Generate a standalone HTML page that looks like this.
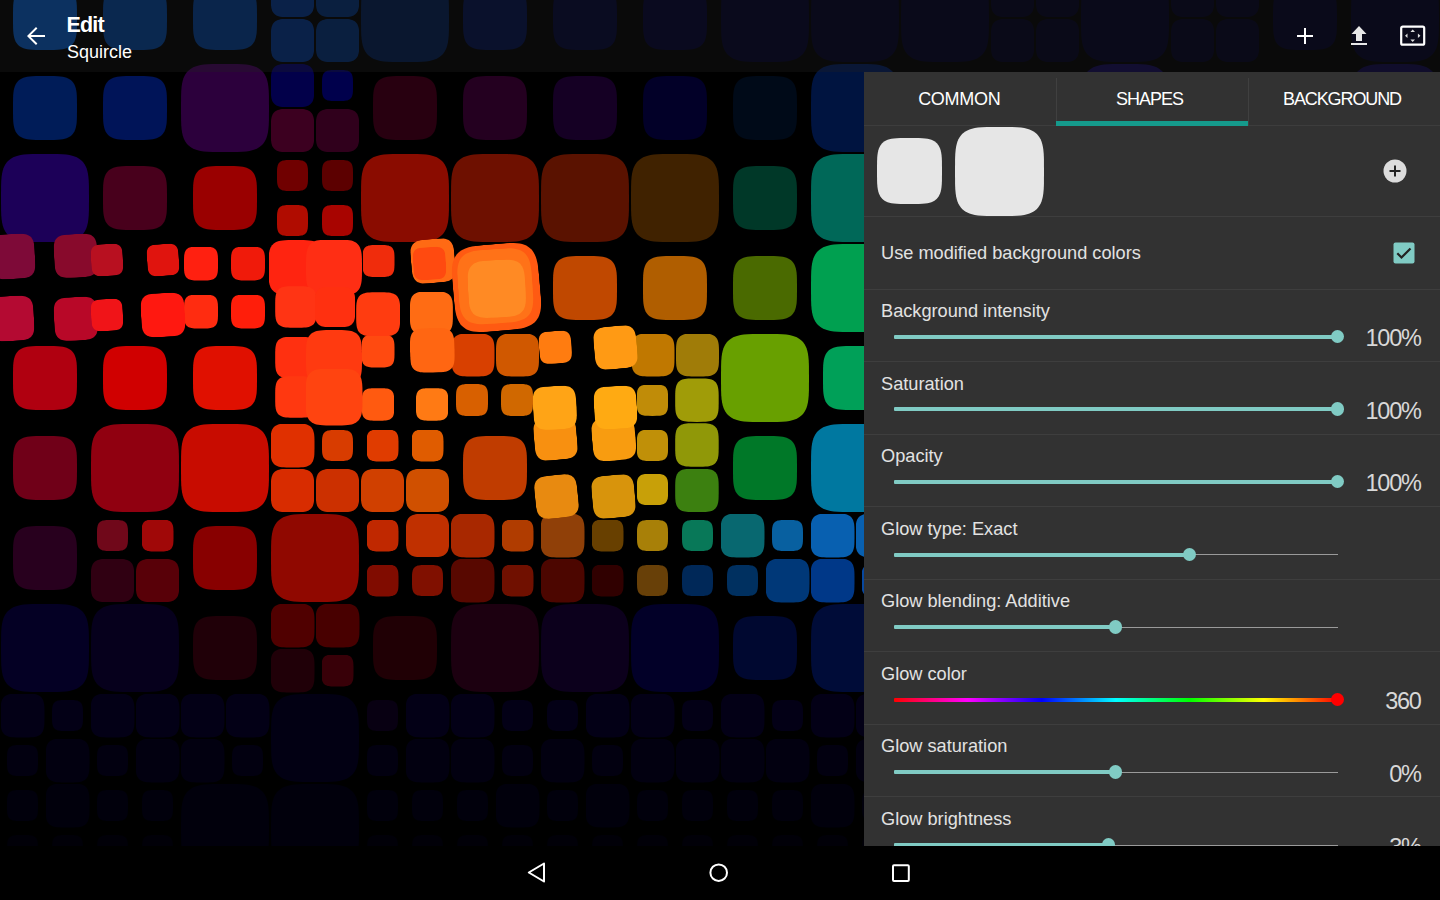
<!DOCTYPE html>
<html lang="en"><head><meta charset="utf-8"><title>Edit – Squircle</title>
<style>
*{margin:0;padding:0;box-sizing:border-box}
html,body{width:1440px;height:900px;overflow:hidden;background:#000}
body{position:relative;font-family:"Liberation Sans",sans-serif;color:#fff}
.q{position:absolute;display:block;clip-path:polygon(100.00% 50.00%,99.92% 64.01%,99.69% 69.78%,99.30% 74.16%,98.76% 77.79%,98.06% 80.93%,97.20% 83.69%,96.17% 86.14%,94.97% 88.33%,93.60% 90.29%,92.04% 92.04%,90.29% 93.60%,88.33% 94.97%,86.14% 96.17%,83.69% 97.20%,80.93% 98.06%,77.79% 98.76%,74.16% 99.30%,69.78% 99.69%,64.01% 99.92%,50.00% 100.00%,35.99% 99.92%,30.22% 99.69%,25.84% 99.30%,22.21% 98.76%,19.07% 98.06%,16.31% 97.20%,13.86% 96.17%,11.67% 94.97%,9.71% 93.60%,7.96% 92.04%,6.40% 90.29%,5.03% 88.33%,3.83% 86.14%,2.80% 83.69%,1.94% 80.93%,1.24% 77.79%,0.70% 74.16%,0.31% 69.78%,0.08% 64.01%,0.00% 50.00%,0.08% 35.99%,0.31% 30.22%,0.70% 25.84%,1.24% 22.21%,1.94% 19.07%,2.80% 16.31%,3.83% 13.86%,5.03% 11.67%,6.40% 9.71%,7.96% 7.96%,9.71% 6.40%,11.67% 5.03%,13.86% 3.83%,16.31% 2.80%,19.07% 1.94%,22.21% 1.24%,25.84% 0.70%,30.22% 0.31%,35.99% 0.08%,50.00% 0.00%,64.01% 0.08%,69.78% 0.31%,74.16% 0.70%,77.79% 1.24%,80.93% 1.94%,83.69% 2.80%,86.14% 3.83%,88.33% 5.03%,90.29% 6.40%,92.04% 7.96%,93.60% 9.71%,94.97% 11.67%,96.17% 13.86%,97.20% 16.31%,98.06% 19.07%,98.76% 22.21%,99.30% 25.84%,99.69% 30.22%,99.92% 35.99%)}
#wall{position:absolute;left:0;top:0;width:1440px;height:846px;overflow:hidden;background:#000}
#bar{position:absolute;left:0;top:0;width:1440px;height:72px;overflow:hidden;background:rgba(33,33,33,0.3)}
#bar .t1{position:absolute;left:66.5px;top:12px;font-size:21.5px;font-weight:bold;line-height:26px;letter-spacing:-0.8px;white-space:nowrap}
#bar .t2{position:absolute;left:67px;top:41px;font-size:18px;line-height:22px;white-space:nowrap}
#bar svg{position:absolute}
#panel{position:absolute;left:864px;top:72px;width:576px;height:774px;background:#323232;overflow:hidden}
.tabs{position:absolute;left:0;top:0;width:576px;height:54px;border-bottom:1px solid #3d3d3d}
.tab{position:absolute;top:0;width:192px;height:54px;text-align:center;font-size:18px;line-height:54px;color:#fff;white-space:nowrap}
.tab.b::before{content:'';position:absolute;left:0;top:6px;width:1px;height:48px;background:#404040}
.ind{position:absolute;left:192px;top:49px;width:192px;height:5px;background:#159a8c}
.sep{position:absolute;left:0;width:576px;height:1px;background:#3e3e3e}
.lbl{position:absolute;left:17px;font-size:18.2px;line-height:22px;color:#e2e2e2;white-space:nowrap}
.val{position:absolute;right:19.5px;font-size:23.5px;letter-spacing:-1.3px;line-height:26px;color:#d8d8d8;white-space:nowrap;text-align:right}
.trk{position:absolute;left:30px;height:4px;background:#80cbc4;border-radius:1px}
.trk0{position:absolute;height:1px;background:#9a9a9a}
.th{position:absolute;width:13.5px;height:13.5px;margin:-0.25px 0 0 -0.25px;border-radius:50%;background:#80cbc4}
#nav{position:absolute;left:0;top:846px;width:1440px;height:54px;background:#000}
#nav svg{position:absolute;left:0;top:0}

</style></head>
<body>
<div id="wall">
<i class="q" style="left:13.0px;top:-14.0px;width:64.0px;height:64.0px;background:#03397b"></i>
<i class="q" style="left:103.0px;top:-14.0px;width:64.0px;height:64.0px;background:#002b64"></i>
<i class="q" style="left:193.0px;top:-14.0px;width:64.0px;height:64.0px;background:#00285e"></i>
<i class="q" style="left:270.8px;top:-26.2px;width:43.5px;height:43.5px;background:#002259"></i>
<i class="q" style="left:315.8px;top:-26.2px;width:43.5px;height:43.5px;background:#001f4d"></i>
<i class="q" style="left:270.8px;top:18.8px;width:43.5px;height:43.5px;background:#002259"></i>
<i class="q" style="left:315.8px;top:18.8px;width:43.5px;height:43.5px;background:#001f4d"></i>
<i class="q" style="left:361.0px;top:-26.0px;width:88.0px;height:88.0px;background:#001436"></i>
<i class="q" style="left:463.0px;top:-14.0px;width:64.0px;height:64.0px;background:#000b31"></i>
<i class="q" style="left:553.0px;top:-14.0px;width:64.0px;height:64.0px;background:#000322"></i>
<i class="q" style="left:643.0px;top:-14.0px;width:64.0px;height:64.0px;background:#00001f"></i>
<i class="q" style="left:721.0px;top:-26.0px;width:88.0px;height:88.0px;background:#00001a"></i>
<i class="q" style="left:811.0px;top:-26.0px;width:88.0px;height:88.0px;background:#000017"></i>
<i class="q" style="left:901.0px;top:-26.0px;width:88.0px;height:88.0px;background:#000017"></i>
<i class="q" style="left:990.8px;top:-26.2px;width:43.5px;height:43.5px;background:#000015"></i>
<i class="q" style="left:1035.8px;top:-26.2px;width:43.5px;height:43.5px;background:#000015"></i>
<i class="q" style="left:990.8px;top:18.8px;width:43.5px;height:43.5px;background:#000015"></i>
<i class="q" style="left:1035.8px;top:18.8px;width:43.5px;height:43.5px;background:#000015"></i>
<i class="q" style="left:1081.0px;top:-26.0px;width:88.0px;height:88.0px;background:#000018"></i>
<i class="q" style="left:1170.8px;top:-26.2px;width:43.5px;height:43.5px;background:#000015"></i>
<i class="q" style="left:1215.8px;top:-26.2px;width:43.5px;height:43.5px;background:#000015"></i>
<i class="q" style="left:1170.8px;top:18.8px;width:43.5px;height:43.5px;background:#000015"></i>
<i class="q" style="left:1215.8px;top:18.8px;width:43.5px;height:43.5px;background:#000015"></i>
<i class="q" style="left:1273.0px;top:-14.0px;width:64.0px;height:64.0px;background:#000017"></i>
<i class="q" style="left:1351.0px;top:-26.0px;width:88.0px;height:88.0px;background:#000017"></i>
<i class="q" style="left:13.0px;top:76.0px;width:64.0px;height:64.0px;background:#001c58"></i>
<i class="q" style="left:103.0px;top:76.0px;width:64.0px;height:64.0px;background:#001458"></i>
<i class="q" style="left:181.0px;top:64.0px;width:88.0px;height:88.0px;background:#2c003c"></i>
<i class="q" style="left:270.8px;top:63.8px;width:43.5px;height:43.5px;background:#02004a"></i>
<i class="q" style="left:322.0px;top:70.0px;width:31.0px;height:31.0px;background:#00004c"></i>
<i class="q" style="left:270.8px;top:108.8px;width:43.5px;height:43.5px;background:#3c0020"></i>
<i class="q" style="left:315.8px;top:108.8px;width:43.5px;height:43.5px;background:#30001c"></i>
<i class="q" style="left:373.0px;top:76.0px;width:64.0px;height:64.0px;background:#280010"></i>
<i class="q" style="left:463.0px;top:76.0px;width:64.0px;height:64.0px;background:#240020"></i>
<i class="q" style="left:553.0px;top:76.0px;width:64.0px;height:64.0px;background:#150024"></i>
<i class="q" style="left:643.0px;top:76.0px;width:64.0px;height:64.0px;background:#020028"></i>
<i class="q" style="left:733.0px;top:76.0px;width:64.0px;height:64.0px;background:#000a18"></i>
<i class="q" style="left:811.0px;top:64.0px;width:88.0px;height:88.0px;background:#001440"></i>
<i class="q" style="left:1081.0px;top:64.0px;width:88.0px;height:88.0px;background:#0c0638"></i>
<i class="q" style="left:1351.0px;top:64.0px;width:88.0px;height:88.0px;background:#0a0530"></i>
<i class="q" style="left:1.0px;top:154.0px;width:88.0px;height:88.0px;background:#1c0058"></i>
<i class="q" style="left:103.0px;top:166.0px;width:64.0px;height:64.0px;background:#48001c"></i>
<i class="q" style="left:193.0px;top:166.0px;width:64.0px;height:64.0px;background:#9a0000"></i>
<i class="q" style="left:277.0px;top:160.0px;width:31.0px;height:31.0px;background:#700000"></i>
<i class="q" style="left:322.0px;top:160.0px;width:31.0px;height:31.0px;background:#5c0000"></i>
<i class="q" style="left:277.0px;top:205.0px;width:31.0px;height:31.0px;background:#b00c00"></i>
<i class="q" style="left:322.0px;top:205.0px;width:31.0px;height:31.0px;background:#a80400"></i>
<i class="q" style="left:361.0px;top:154.0px;width:88.0px;height:88.0px;background:#8a0c00"></i>
<i class="q" style="left:451.0px;top:154.0px;width:88.0px;height:88.0px;background:#6e1000"></i>
<i class="q" style="left:541.0px;top:154.0px;width:88.0px;height:88.0px;background:#5a1200"></i>
<i class="q" style="left:631.0px;top:154.0px;width:88.0px;height:88.0px;background:#402200"></i>
<i class="q" style="left:733.0px;top:166.0px;width:64.0px;height:64.0px;background:#003828"></i>
<i class="q" style="left:811.0px;top:154.0px;width:88.0px;height:88.0px;background:#006858"></i>
<i class="q" style="left:184.0px;top:246.5px;width:34.0px;height:34.0px;background:#ff2010"></i>
<i class="q" style="left:231.0px;top:246.5px;width:34.0px;height:34.0px;background:#f01a0a"></i>
<i class="q" style="left:184.0px;top:294.5px;width:34.0px;height:34.0px;background:#ff2c10"></i>
<i class="q" style="left:231.0px;top:294.5px;width:34.0px;height:34.0px;background:#ff1e0a"></i>
<i class="q" style="left:362.5px;top:245.0px;width:32.0px;height:32.0px;background:#f02c0c"></i>
<i class="q" style="left:553.0px;top:256.0px;width:64.0px;height:64.0px;background:#c04800"></i>
<i class="q" style="left:643.0px;top:256.0px;width:64.0px;height:64.0px;background:#b05e00"></i>
<i class="q" style="left:733.0px;top:256.0px;width:64.0px;height:64.0px;background:#4a6a00"></i>
<i class="q" style="left:811.0px;top:244.0px;width:88.0px;height:88.0px;background:#00a050"></i>
<i class="q" style="left:13.0px;top:346.0px;width:64.0px;height:64.0px;background:#b00010"></i>
<i class="q" style="left:103.0px;top:346.0px;width:64.0px;height:64.0px;background:#d00000"></i>
<i class="q" style="left:193.0px;top:346.0px;width:64.0px;height:64.0px;background:#e01000"></i>
<i class="q" style="left:361.5px;top:334.5px;width:33.0px;height:33.0px;background:#ff4a10"></i>
<i class="q" style="left:361.8px;top:388.2px;width:32.5px;height:32.5px;background:#ff5a10"></i>
<i class="q" style="left:415.9px;top:388.2px;width:32.5px;height:32.5px;background:#ff7a14"></i>
<i class="q" style="left:451.5px;top:333.5px;width:43.0px;height:43.0px;background:#d84000"></i>
<i class="q" style="left:496.0px;top:333.5px;width:43.0px;height:43.0px;background:#d05800"></i>
<i class="q" style="left:456.0px;top:384.0px;width:32.0px;height:32.0px;background:#d86000"></i>
<i class="q" style="left:501.0px;top:384.0px;width:32.0px;height:32.0px;background:#d06800"></i>
<i class="q" style="left:631.5px;top:333.5px;width:43.0px;height:43.0px;background:#c07800"></i>
<i class="q" style="left:676.0px;top:333.5px;width:43.0px;height:43.0px;background:#a07c08"></i>
<i class="q" style="left:636.8px;top:384.6px;width:31.3px;height:31.3px;background:#c08c08"></i>
<i class="q" style="left:675.2px;top:378.4px;width:43.5px;height:43.5px;background:#a09c08"></i>
<i class="q" style="left:721.0px;top:334.0px;width:88.0px;height:88.0px;background:#68a000"></i>
<i class="q" style="left:823.0px;top:346.0px;width:64.0px;height:64.0px;background:#00a058"></i>
<i class="q" style="left:13.0px;top:436.0px;width:64.0px;height:64.0px;background:#700018"></i>
<i class="q" style="left:91.0px;top:424.0px;width:88.0px;height:88.0px;background:#900010"></i>
<i class="q" style="left:181.0px;top:424.0px;width:88.0px;height:88.0px;background:#c80c00"></i>
<i class="q" style="left:270.5px;top:423.5px;width:44.0px;height:44.0px;background:#e03000"></i>
<i class="q" style="left:322.0px;top:430.0px;width:31.0px;height:31.0px;background:#d83c00"></i>
<i class="q" style="left:270.8px;top:468.8px;width:43.5px;height:43.5px;background:#d82c00"></i>
<i class="q" style="left:315.8px;top:468.8px;width:43.5px;height:43.5px;background:#cc3000"></i>
<i class="q" style="left:366.5px;top:429.5px;width:32.0px;height:32.0px;background:#e03c00"></i>
<i class="q" style="left:411.5px;top:429.5px;width:32.0px;height:32.0px;background:#e05c00"></i>
<i class="q" style="left:360.8px;top:468.8px;width:43.5px;height:43.5px;background:#d04000"></i>
<i class="q" style="left:405.8px;top:468.8px;width:43.5px;height:43.5px;background:#d05000"></i>
<i class="q" style="left:463.0px;top:436.0px;width:64.0px;height:64.0px;background:#c03c00"></i>
<i class="q" style="left:636.8px;top:429.7px;width:31.3px;height:31.3px;background:#c09008"></i>
<i class="q" style="left:675.2px;top:423.2px;width:43.5px;height:43.5px;background:#909808"></i>
<i class="q" style="left:636.8px;top:473.9px;width:31.3px;height:31.3px;background:#c8a008"></i>
<i class="q" style="left:675.2px;top:468.6px;width:43.5px;height:43.5px;background:#3c8010"></i>
<i class="q" style="left:733.0px;top:436.0px;width:64.0px;height:64.0px;background:#007828"></i>
<i class="q" style="left:811.0px;top:424.0px;width:88.0px;height:88.0px;background:#0078a0"></i>
<i class="q" style="left:13.0px;top:526.0px;width:64.0px;height:64.0px;background:#28001e"></i>
<i class="q" style="left:97.0px;top:520.0px;width:31.0px;height:31.0px;background:#70081a"></i>
<i class="q" style="left:141.5px;top:519.5px;width:32.0px;height:32.0px;background:#a00808"></i>
<i class="q" style="left:90.8px;top:558.8px;width:43.5px;height:43.5px;background:#300012"></i>
<i class="q" style="left:135.8px;top:558.8px;width:43.5px;height:43.5px;background:#580008"></i>
<i class="q" style="left:193.0px;top:526.0px;width:64.0px;height:64.0px;background:#880000"></i>
<i class="q" style="left:271.0px;top:514.0px;width:88.0px;height:88.0px;background:#900800"></i>
<i class="q" style="left:366.5px;top:519.5px;width:32.0px;height:32.0px;background:#c02800"></i>
<i class="q" style="left:405.8px;top:513.8px;width:43.5px;height:43.5px;background:#c03000"></i>
<i class="q" style="left:366.5px;top:564.5px;width:32.0px;height:32.0px;background:#800c00"></i>
<i class="q" style="left:412.0px;top:565.0px;width:31.0px;height:31.0px;background:#801000"></i>
<i class="q" style="left:450.5px;top:513.5px;width:44.0px;height:44.0px;background:#a82800"></i>
<i class="q" style="left:501.5px;top:519.5px;width:32.0px;height:32.0px;background:#b03c00"></i>
<i class="q" style="left:450.5px;top:558.5px;width:44.0px;height:44.0px;background:#580800"></i>
<i class="q" style="left:501.5px;top:564.5px;width:32.0px;height:32.0px;background:#701000"></i>
<i class="q" style="left:540.5px;top:513.5px;width:44.0px;height:44.0px;background:#904008"></i>
<i class="q" style="left:591.5px;top:519.5px;width:32.0px;height:32.0px;background:#684000"></i>
<i class="q" style="left:540.5px;top:558.5px;width:44.0px;height:44.0px;background:#4c0600"></i>
<i class="q" style="left:591.5px;top:564.5px;width:32.0px;height:32.0px;background:#300000"></i>
<i class="q" style="left:637.0px;top:520.0px;width:31.0px;height:31.0px;background:#a88008"></i>
<i class="q" style="left:682.0px;top:520.0px;width:31.0px;height:31.0px;background:#087858"></i>
<i class="q" style="left:637.0px;top:565.0px;width:31.0px;height:31.0px;background:#684008"></i>
<i class="q" style="left:682.0px;top:565.0px;width:31.0px;height:31.0px;background:#002858"></i>
<i class="q" style="left:720.5px;top:513.5px;width:44.0px;height:44.0px;background:#086870"></i>
<i class="q" style="left:772.0px;top:520.0px;width:31.0px;height:31.0px;background:#0860a0"></i>
<i class="q" style="left:727.0px;top:565.0px;width:31.0px;height:31.0px;background:#003060"></i>
<i class="q" style="left:765.5px;top:558.5px;width:44.0px;height:44.0px;background:#003878"></i>
<i class="q" style="left:810.5px;top:513.5px;width:44.0px;height:44.0px;background:#0860b0"></i>
<i class="q" style="left:855.5px;top:513.5px;width:44.0px;height:44.0px;background:#0860b0"></i>
<i class="q" style="left:810.5px;top:558.5px;width:44.0px;height:44.0px;background:#003888"></i>
<i class="q" style="left:861.5px;top:564.5px;width:32.0px;height:32.0px;background:#0848a0"></i>
<i class="q" style="left:1.0px;top:604.0px;width:88.0px;height:88.0px;background:#040024"></i>
<i class="q" style="left:91.0px;top:604.0px;width:88.0px;height:88.0px;background:#06001c"></i>
<i class="q" style="left:193.0px;top:616.0px;width:64.0px;height:64.0px;background:#200008"></i>
<i class="q" style="left:270.5px;top:603.5px;width:44.0px;height:44.0px;background:#500000"></i>
<i class="q" style="left:315.5px;top:603.5px;width:44.0px;height:44.0px;background:#480000"></i>
<i class="q" style="left:270.5px;top:648.5px;width:44.0px;height:44.0px;background:#200008"></i>
<i class="q" style="left:321.5px;top:654.5px;width:32.0px;height:32.0px;background:#380008"></i>
<i class="q" style="left:373.0px;top:616.0px;width:64.0px;height:64.0px;background:#200005"></i>
<i class="q" style="left:451.0px;top:604.0px;width:88.0px;height:88.0px;background:#1c0010"></i>
<i class="q" style="left:541.0px;top:604.0px;width:88.0px;height:88.0px;background:#0c001c"></i>
<i class="q" style="left:631.0px;top:604.0px;width:88.0px;height:88.0px;background:#020028"></i>
<i class="q" style="left:733.0px;top:616.0px;width:64.0px;height:64.0px;background:#000830"></i>
<i class="q" style="left:811.0px;top:604.0px;width:88.0px;height:88.0px;background:#000c38"></i>
<i class="q" style="left:0.5px;top:693.5px;width:44.0px;height:44.0px;background:#030016"></i>
<i class="q" style="left:52.0px;top:700.0px;width:31.0px;height:31.0px;background:#030016"></i>
<i class="q" style="left:7.0px;top:745.0px;width:31.0px;height:31.0px;background:#020010"></i>
<i class="q" style="left:45.5px;top:738.5px;width:44.0px;height:44.0px;background:#020010"></i>
<i class="q" style="left:90.5px;top:693.5px;width:44.0px;height:44.0px;background:#030016"></i>
<i class="q" style="left:135.5px;top:693.5px;width:44.0px;height:44.0px;background:#030016"></i>
<i class="q" style="left:97.0px;top:745.0px;width:31.0px;height:31.0px;background:#020010"></i>
<i class="q" style="left:135.5px;top:738.5px;width:44.0px;height:44.0px;background:#020010"></i>
<i class="q" style="left:180.5px;top:693.5px;width:44.0px;height:44.0px;background:#030016"></i>
<i class="q" style="left:225.5px;top:693.5px;width:44.0px;height:44.0px;background:#030016"></i>
<i class="q" style="left:180.5px;top:738.5px;width:44.0px;height:44.0px;background:#020010"></i>
<i class="q" style="left:232.0px;top:745.0px;width:31.0px;height:31.0px;background:#020010"></i>
<i class="q" style="left:271.0px;top:694.0px;width:88.0px;height:88.0px;background:#020013"></i>
<i class="q" style="left:367.0px;top:700.0px;width:31.0px;height:31.0px;background:#080012"></i>
<i class="q" style="left:405.5px;top:693.5px;width:44.0px;height:44.0px;background:#030016"></i>
<i class="q" style="left:367.0px;top:745.0px;width:31.0px;height:31.0px;background:#020010"></i>
<i class="q" style="left:405.5px;top:738.5px;width:44.0px;height:44.0px;background:#020010"></i>
<i class="q" style="left:450.5px;top:693.5px;width:44.0px;height:44.0px;background:#030016"></i>
<i class="q" style="left:502.0px;top:700.0px;width:31.0px;height:31.0px;background:#030016"></i>
<i class="q" style="left:450.5px;top:738.5px;width:44.0px;height:44.0px;background:#020010"></i>
<i class="q" style="left:502.0px;top:745.0px;width:31.0px;height:31.0px;background:#020010"></i>
<i class="q" style="left:547.0px;top:700.0px;width:31.0px;height:31.0px;background:#030016"></i>
<i class="q" style="left:585.5px;top:693.5px;width:44.0px;height:44.0px;background:#030016"></i>
<i class="q" style="left:540.5px;top:738.5px;width:44.0px;height:44.0px;background:#020010"></i>
<i class="q" style="left:592.0px;top:745.0px;width:31.0px;height:31.0px;background:#020010"></i>
<i class="q" style="left:630.5px;top:693.5px;width:44.0px;height:44.0px;background:#030016"></i>
<i class="q" style="left:682.0px;top:700.0px;width:31.0px;height:31.0px;background:#030016"></i>
<i class="q" style="left:630.5px;top:738.5px;width:44.0px;height:44.0px;background:#020010"></i>
<i class="q" style="left:675.5px;top:738.5px;width:44.0px;height:44.0px;background:#020010"></i>
<i class="q" style="left:720.5px;top:693.5px;width:44.0px;height:44.0px;background:#030016"></i>
<i class="q" style="left:772.0px;top:700.0px;width:31.0px;height:31.0px;background:#030016"></i>
<i class="q" style="left:720.5px;top:738.5px;width:44.0px;height:44.0px;background:#020010"></i>
<i class="q" style="left:765.5px;top:738.5px;width:44.0px;height:44.0px;background:#020010"></i>
<i class="q" style="left:810.5px;top:693.5px;width:44.0px;height:44.0px;background:#030016"></i>
<i class="q" style="left:855.5px;top:693.5px;width:44.0px;height:44.0px;background:#030016"></i>
<i class="q" style="left:817.0px;top:745.0px;width:31.0px;height:31.0px;background:#020010"></i>
<i class="q" style="left:855.5px;top:738.5px;width:44.0px;height:44.0px;background:#020010"></i>
<i class="q" style="left:7.0px;top:790.0px;width:31.0px;height:31.0px;background:#01000c"></i>
<i class="q" style="left:45.5px;top:783.5px;width:44.0px;height:44.0px;background:#01000c"></i>
<i class="q" style="left:7.0px;top:835.0px;width:31.0px;height:31.0px;background:#010008"></i>
<i class="q" style="left:52.0px;top:835.0px;width:31.0px;height:31.0px;background:#010008"></i>
<i class="q" style="left:97.0px;top:790.0px;width:31.0px;height:31.0px;background:#01000c"></i>
<i class="q" style="left:142.0px;top:790.0px;width:31.0px;height:31.0px;background:#01000c"></i>
<i class="q" style="left:97.0px;top:835.0px;width:31.0px;height:31.0px;background:#010008"></i>
<i class="q" style="left:142.0px;top:835.0px;width:31.0px;height:31.0px;background:#010008"></i>
<i class="q" style="left:181.0px;top:784.0px;width:88.0px;height:88.0px;background:#01000c"></i>
<i class="q" style="left:271.0px;top:784.0px;width:88.0px;height:88.0px;background:#01000c"></i>
<i class="q" style="left:367.0px;top:790.0px;width:31.0px;height:31.0px;background:#01000c"></i>
<i class="q" style="left:412.0px;top:790.0px;width:31.0px;height:31.0px;background:#01000c"></i>
<i class="q" style="left:367.0px;top:835.0px;width:31.0px;height:31.0px;background:#010008"></i>
<i class="q" style="left:412.0px;top:835.0px;width:31.0px;height:31.0px;background:#010008"></i>
<i class="q" style="left:457.0px;top:790.0px;width:31.0px;height:31.0px;background:#01000c"></i>
<i class="q" style="left:495.5px;top:783.5px;width:44.0px;height:44.0px;background:#01000c"></i>
<i class="q" style="left:457.0px;top:835.0px;width:31.0px;height:31.0px;background:#010008"></i>
<i class="q" style="left:502.0px;top:835.0px;width:31.0px;height:31.0px;background:#010008"></i>
<i class="q" style="left:547.0px;top:790.0px;width:31.0px;height:31.0px;background:#01000c"></i>
<i class="q" style="left:585.5px;top:783.5px;width:44.0px;height:44.0px;background:#01000c"></i>
<i class="q" style="left:547.0px;top:835.0px;width:31.0px;height:31.0px;background:#010008"></i>
<i class="q" style="left:592.0px;top:835.0px;width:31.0px;height:31.0px;background:#010008"></i>
<i class="q" style="left:637.0px;top:790.0px;width:31.0px;height:31.0px;background:#01000c"></i>
<i class="q" style="left:682.0px;top:790.0px;width:31.0px;height:31.0px;background:#01000c"></i>
<i class="q" style="left:637.0px;top:835.0px;width:31.0px;height:31.0px;background:#010008"></i>
<i class="q" style="left:682.0px;top:835.0px;width:31.0px;height:31.0px;background:#010008"></i>
<i class="q" style="left:727.0px;top:790.0px;width:31.0px;height:31.0px;background:#01000c"></i>
<i class="q" style="left:772.0px;top:790.0px;width:31.0px;height:31.0px;background:#01000c"></i>
<i class="q" style="left:727.0px;top:835.0px;width:31.0px;height:31.0px;background:#010008"></i>
<i class="q" style="left:772.0px;top:835.0px;width:31.0px;height:31.0px;background:#010008"></i>
<i class="q" style="left:810.5px;top:783.5px;width:44.0px;height:44.0px;background:#01000c"></i>
<i class="q" style="left:862.0px;top:790.0px;width:31.0px;height:31.0px;background:#01000c"></i>
<i class="q" style="left:817.0px;top:835.0px;width:31.0px;height:31.0px;background:#010008"></i>
<i class="q" style="left:862.0px;top:835.0px;width:31.0px;height:31.0px;background:#010008"></i>
<i class="q" style="left:-10.5px;top:233.8px;width:45.0px;height:45.0px;background:#7e0a38;transform:rotate(-3deg)"></i>
<i class="q" style="left:54.0px;top:234.2px;width:43.5px;height:43.5px;background:#880a2c;transform:rotate(-3deg)"></i>
<i class="q" style="left:-11.0px;top:296.2px;width:45.0px;height:45.0px;background:#b40a32;transform:rotate(-3deg)"></i>
<i class="q" style="left:54.0px;top:297.2px;width:43.5px;height:43.5px;background:#b80828;transform:rotate(-3deg)"></i>
<i class="q" style="left:91.0px;top:243.8px;width:32.0px;height:32.0px;background:#b81020;transform:rotate(-3deg)"></i>
<i class="q" style="left:147.2px;top:244.0px;width:32.0px;height:32.0px;background:#e0140e;transform:rotate(-4deg)"></i>
<i class="q" style="left:91.0px;top:299.3px;width:32.0px;height:32.0px;background:#f01418;transform:rotate(-3deg)"></i>
<i class="q" style="left:140.8px;top:293.3px;width:44.0px;height:44.0px;background:#ff1810;transform:rotate(-3deg)"></i>
<i class="q" style="left:268.5px;top:240.0px;width:55.0px;height:55.0px;background:#ff2410"></i>
<i class="q" style="left:306.0px;top:239.5px;width:56.0px;height:56.0px;background:#ff2e14"></i>
<i class="q" style="left:275.2px;top:286.2px;width:41.5px;height:41.5px;background:#ff3414"></i>
<i class="q" style="left:314.8px;top:286.8px;width:40.5px;height:40.5px;background:#ff3010"></i>
<i class="q" style="left:410.5px;top:238.7px;width:44.0px;height:44.0px;background:#ff6a14;transform:rotate(-5deg)"></i>
<i class="q" style="left:413.0px;top:246.5px;width:33.0px;height:33.0px;background:#ff4a10;transform:rotate(-3deg)"></i>
<i class="q" style="left:356.2px;top:292.3px;width:44.0px;height:44.0px;background:#ff3c10"></i>
<i class="q" style="left:409.9px;top:291.5px;width:43.0px;height:43.0px;background:#ff6c14"></i>
<i class="q" style="left:452.8px;top:243.8px;width:87.0px;height:87.0px;background:#ff5a12;transform:rotate(-5deg)"></i>
<i class="q" style="left:458.4px;top:249.1px;width:74.5px;height:74.5px;background:#ff7218;transform:rotate(-4deg)"></i>
<i class="q" style="left:467.6px;top:259.9px;width:57.5px;height:57.5px;background:#ff8a24;transform:rotate(-3deg)"></i>
<i class="q" style="left:275.2px;top:336.8px;width:41.5px;height:41.5px;background:#ff3010"></i>
<i class="q" style="left:275.2px;top:376.2px;width:41.5px;height:41.5px;background:#ff3810"></i>
<i class="q" style="left:306.0px;top:330.0px;width:56.0px;height:56.0px;background:#ff3a10"></i>
<i class="q" style="left:305.5px;top:368.5px;width:57.0px;height:57.0px;background:#ff4410"></i>
<i class="q" style="left:409.8px;top:328.2px;width:44.5px;height:44.5px;background:#ff6612;transform:rotate(-1deg)"></i>
<i class="q" style="left:538.8px;top:331.1px;width:32.5px;height:32.5px;background:#ff7c10;transform:rotate(-4deg)"></i>
<i class="q" style="left:594.0px;top:325.8px;width:43.0px;height:43.0px;background:#ff9a14;transform:rotate(-5deg)"></i>
<i class="q" style="left:534.2px;top:417.1px;width:43.0px;height:43.0px;background:#f89010;transform:rotate(-5deg)"></i>
<i class="q" style="left:592.0px;top:416.6px;width:43.5px;height:43.5px;background:#f89c10;transform:rotate(-5deg)"></i>
<i class="q" style="left:532.5px;top:385.6px;width:43.5px;height:43.5px;background:#ffa416;transform:rotate(-3deg)"></i>
<i class="q" style="left:593.5px;top:385.9px;width:43.0px;height:43.0px;background:#ffaa12;transform:rotate(-3deg)"></i>
<i class="q" style="left:534.5px;top:474.8px;width:43.0px;height:43.0px;background:#e88a10;transform:rotate(-6deg)"></i>
<i class="q" style="left:592.0px;top:474.8px;width:43.0px;height:43.0px;background:#d8940c;transform:rotate(-5deg)"></i>
</div>
<div id="bar">

<svg style="left:24px;top:24px" width="24" height="24" viewBox="0 0 24 24"><path d="M21 11H6.8l6.6-6.6L12 3l-9 9 9 9 1.4-1.4L6.8 13H21z" fill="#fff"/></svg>
<div class="t1">Edit</div>
<div class="t2">Squircle</div>
<svg style="left:1293px;top:24px" width="24" height="24" viewBox="0 0 24 24"><path d="M11 4h2v7h7v2h-7v7h-2v-7H4v-2h7z" fill="#fff"/></svg>
<svg style="left:1347px;top:24px" width="24" height="24" viewBox="0 0 24 24"><path d="M4 19h16v2H4zM9 17h6v-7h4.5L12 2 4.500 10H9z" fill="#e8e8e8"/></svg>
<svg style="left:1400px;top:24px" width="26" height="24" viewBox="0 0 26 24"><rect x="1.200" y="2.700" width="23" height="18" rx="1.500" fill="none" stroke="#fff" stroke-width="2.200"/><path d="M12.700 5.500l2.300 2.500h-4.600zM12.700 18l2.300-2.500h-4.600zM5 11.700l2.500-2.300v4.600zM20.400 11.700l-2.500-2.300v4.600z" fill="#ddd"/></svg>
</div>
<div id="panel">
<div class="tabs">
<div class="tab" style="left:0;letter-spacing:-0.3px;padding-right:1.5px">COMMON</div>
<div class="tab b" style="left:192px;letter-spacing:-1px;padding-right:5px">SHAPES</div>
<div class="tab b" style="left:384px;letter-spacing:-1.1px;padding-right:4px">BACKGROUND</div>
<div class="ind"></div>
</div>
<i class="q" style="left:13px;top:66px;width:65px;height:66px;background:#e6e6e6"></i>
<i class="q" style="left:91px;top:55px;width:89px;height:89px;background:#e6e6e6"></i>
<svg style="position:absolute;left:519px;top:87px" width="24" height="24" viewBox="0 0 24 24"><circle cx="12" cy="12" r="11.500" fill="#dcdcdc"/><path d="M11 6.500h2v4.500h4.500v2h-4.500v4.500h-2v-4.500h-4.500v-2h4.500z" fill="#222"/></svg>
<div class="sep" style="top:144px"></div>
<div class="lbl" style="top:170px">Use modified background colors</div>
<svg style="position:absolute;left:529px;top:170px" width="22" height="22" viewBox="0 0 22 22"><rect x="0.500" y="0.500" width="21" height="21" rx="2" fill="#80cbc4"/><path d="M4.300 11.300l4.200 4.200 9-9" fill="none" stroke="#222" stroke-width="2.200"/></svg>
<div class="sep" style="top:217px"></div>

<div class="lbl" style="top:228px">Background intensity</div>
<div class="trk" style="top:262.500px;width:444px"></div><div class="th" style="left:467px;top:258px"></div>
<div class="val" style="top:253px">100%</div>
<div class="sep" style="top:289px"></div>

<div class="lbl" style="top:300.5px">Saturation</div>
<div class="trk" style="top:335px;width:444px"></div><div class="th" style="left:467px;top:330.500px"></div>
<div class="val" style="top:325.500px">100%</div>
<div class="sep" style="top:362px"></div>

<div class="lbl" style="top:373px">Opacity</div>
<div class="trk" style="top:407.500px;width:444px"></div><div class="th" style="left:467px;top:403px"></div>
<div class="val" style="top:398px">100%</div>
<div class="sep" style="top:434px"></div>

<div class="lbl" style="top:446px">Glow type: Exact</div>
<div class="trk0" style="left:326px;top:482px;width:148px"></div>
<div class="trk" style="top:480.500px;width:296px"></div><div class="th" style="left:319px;top:476px"></div>
<div class="sep" style="top:507px"></div>

<div class="lbl" style="top:517.500px">Glow blending: Additive</div>
<div class="trk0" style="left:252px;top:555px;width:222px"></div>
<div class="trk" style="top:553px;width:222px"></div><div class="th" style="left:245px;top:548.500px"></div>
<div class="sep" style="top:579px"></div>

<div class="lbl" style="top:590.5px">Glow color</div>
<div class="trk" style="top:625.500px;width:444px;background:linear-gradient(90deg,#f00 0%,#f0f 16.600%,#00f 33.300%,#0ff 50%,#0f0 66.600%,#ff0 83.300%,#f00 100%)"></div><div class="th" style="left:467px;top:621px;background:#f00"></div>
<div class="val" style="top:616px">360</div>
<div class="sep" style="top:652px"></div>

<div class="lbl" style="top:662.500px">Glow saturation</div>
<div class="trk0" style="left:252px;top:700px;width:222px"></div>
<div class="trk" style="top:698px;width:222px"></div><div class="th" style="left:245px;top:693.500px"></div>
<div class="val" style="top:688.500px">0%</div>
<div class="sep" style="top:724px"></div>

<div class="lbl" style="top:735.5px">Glow brightness</div>
<div class="trk0" style="left:246px;top:772.500px;width:228px"></div>
<div class="trk" style="top:770.500px;width:215px"></div><div class="th" style="left:238px;top:766px"></div>
<div class="val" style="top:762px">3%</div>
</div>
<div id="nav">
<svg width="1440" height="54" viewBox="0 0 1440 54"><path d="M544 17.500L528.800 26.500 544 35.500z" fill="none" stroke="#fff" stroke-width="2" stroke-linejoin="round"/><circle cx="718.700" cy="26.700" r="8.300" fill="none" stroke="#fff" stroke-width="2"/><rect x="893" y="19.300" width="15.800" height="15.800" rx="1" fill="none" stroke="#fff" stroke-width="2"/></svg>
</div>

</body></html>
